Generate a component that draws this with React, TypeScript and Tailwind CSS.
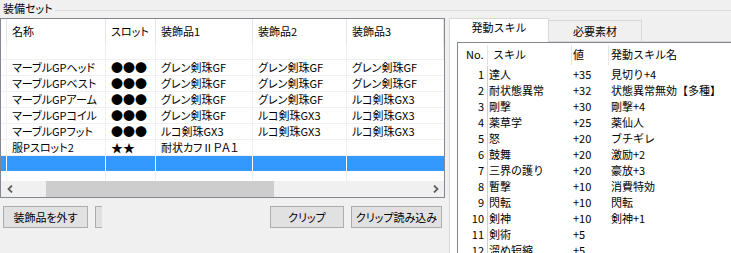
import React from 'react';

// 装備セット一覧。
const EQUIP_ROWS = [
  { name: 'マーブルGPヘッド', slot: '●●●', d1: 'グレン剣珠GF', d2: 'グレン剣珠GF', d3: 'グレン剣珠GF' },
  { name: 'マーブルGPベスト', slot: '●●●', d1: 'グレン剣珠GF', d2: 'グレン剣珠GF', d3: 'グレン剣珠GF' },
  { name: 'マーブルGPアーム', slot: '●●●', d1: 'グレン剣珠GF', d2: 'グレン剣珠GF', d3: 'ルコ剣珠GX3' },
  { name: 'マーブルGPコイル', slot: '●●●', d1: 'グレン剣珠GF', d2: 'ルコ剣珠GX3', d3: 'ルコ剣珠GX3' },
  { name: 'マーブルGPフット', slot: '●●●', d1: 'ルコ剣珠GX3', d2: 'ルコ剣珠GX3', d3: 'ルコ剣珠GX3' },
  { name: '服Pスロット2', slot: '★★', d1: '耐状カフⅡＰＡ１', d2: '', d3: '' },
];

// 発動スキル一覧。
const SKILL_ROWS = [
  ['達人', '+35', '見切り+4'],
  ['耐状態異常', '+32', '状態異常無効【多種】'],
  ['剛撃', '+30', '剛撃+4'],
  ['薬草学', '+25', '薬仙人'],
  ['怒', '+20', 'ブチギレ'],
  ['鼓舞', '+20', '激励+2'],
  ['三界の護り', '+20', '豪放+3'],
  ['暫撃', '+10', '消費特効'],
  ['閃転', '+10', '閃転'],
  ['剣神', '+10', '剣神+1'],
  ['剣術', '+5', ''],
  ['溜め短縮', '+5', ''],
];

const COLS = ['w-[6px]', 'w-[99px]', 'w-[50px]', 'w-[97px]', 'w-[94px]', 'flex-1'];

function Cell({ w, line, pad = 'pl-[5px]', children }: { w: string; line: string; pad?: string; children?: React.ReactNode }) {
  return (
    <div className={`${w} shrink-0 h-full border-r ${line} ${pad} whitespace-nowrap overflow-hidden leading-[15px]`}>
      {children}
    </div>
  );
}

function Chevron({ dir }: { dir: 'left' | 'right' }) {
  return (
    <svg width="6" height="8" viewBox="0 0 6 8">
      <path d={dir === 'left' ? 'M5 0.5 L1.5 4 L5 7.5' : 'M1 0.5 L4.5 4 L1 7.5'} fill="none" stroke="#606060" strokeWidth="1.8" />
    </svg>
  );
}

function EquipTable() {
  return (
    <div className="h-[180px] border border-[#828790] bg-white flex flex-col">
      <div className="h-[162px] overflow-hidden">
        {/* ヘッダー */}
        <div className="flex h-[25px] items-stretch">
          {['', '名称', 'スロット', '装飾品1', '装飾品2', '装飾品3'].map((t, i) => (
            <div key={i} className={`${COLS[i]} shrink-0 flex items-center border-r border-[#e5e5e5] ${i === 0 ? '' : 'pl-[5px]'} whitespace-nowrap`}>
              {t}
            </div>
          ))}
        </div>
        <div className="flex h-[16px] border-b border-[#f0f0f0]">
          {COLS.map((w, i) => <Cell key={i} w={w} line="border-[#f0f0f0]" />)}
        </div>
        {EQUIP_ROWS.map((r) => (
          <div key={r.name} className="flex h-[16px] border-b border-[#f0f0f0]">
            <Cell w={COLS[0]} line="border-[#f0f0f0]" pad="" />
            <Cell w={COLS[1]} line="border-[#f0f0f0]">{r.name}</Cell>
            <Cell w={COLS[2]} line="border-[#f0f0f0]"><span className="text-[12px]">{r.slot}</span></Cell>
            <Cell w={COLS[3]} line="border-[#f0f0f0]">{r.d1}</Cell>
            <Cell w={COLS[4]} line="border-[#f0f0f0]">{r.d2}</Cell>
            <Cell w={COLS[5]} line="border-transparent">{r.d3}</Cell>
          </div>
        ))}
        {/* 選択行 */}
        <div className="flex h-[16px] bg-[#3399ff] border-b border-white">
          {COLS.map((w, i) => <Cell key={i} w={w} line={i === 5 ? 'border-transparent' : 'border-white'} pad="" />)}
        </div>
        <div className="flex h-[16px]">
          {COLS.map((w, i) => <Cell key={i} w={w} line={i === 5 ? 'border-transparent' : 'border-[#f0f0f0]'} pad="" />)}
        </div>
      </div>
      {/* 横スクロールバー */}
      <div className="h-[16px] bg-[#f0f0f0] flex">
        <div className="w-[17px] flex items-center justify-center"><Chevron dir="left" /></div>
        <div className="flex-1 flex">
          <div className="ml-[28px] w-[228px] bg-[#cdcdcd]" />
        </div>
        <div className="w-[17px] flex items-center justify-center"><Chevron dir="right" /></div>
      </div>
    </div>
  );
}

function SkillTable() {
  return (
    <div className="border-l border-t border-[#828790] bg-white h-[220px] [font-feature-settings:normal]">
      <div className="flex h-[23px] items-center">
        <div className="w-[30px] h-[20px] shrink-0 border-r border-[#e5e5e5] pl-[8px] flex items-center">No.</div>
        <div className="w-[84px] h-[20px] shrink-0 border-r border-[#e5e5e5] pl-[5px] flex items-center">スキル</div>
        <div className="w-[37px] h-[20px] shrink-0 border-r border-[#e5e5e5] pl-[1px] flex items-center">値</div>
        <div className="flex-1 pl-[2px] whitespace-nowrap">発動スキル名</div>
      </div>
      {SKILL_ROWS.map((r, i) => (
        <div key={i} className="flex h-[16px] leading-[16px]">
          <div className="w-[30px] shrink-0 border-r border-[#d0d0d0] pr-[3px] text-right">{i + 1}</div>
          <div className="w-[84px] shrink-0 pl-[1px] whitespace-nowrap">{r[0]}</div>
          <div className="w-[37px] shrink-0 pl-[1px]">{r[1]}</div>
          <div className="flex-1 pl-[2px] whitespace-nowrap">{r[2]}</div>
        </div>
      ))}
    </div>
  );
}

export default function App() {
  return (
    <div className="w-[731px] h-[253px] overflow-hidden bg-[#f0f0f0] text-black text-[11px] font-['Noto_Sans_CJK_JP',sans-serif] [font-feature-settings:'palt']">
      {/* グループボックス見出し */}
      <div className="flex h-[18px]">
        <span className="pl-[3px] pr-[2px] leading-[16px]">装備セット</span>
        <div className="flex-1 mt-[10px] border-t border-[#dcdcdc]" />
      </div>

      <div className="flex">
        <div className="w-[445px] shrink-0">
          <EquipTable />
          <div className="flex mt-[8px] h-[22px]">
            <button className="ml-[3px] w-[85px] h-full bg-[#e1e1e1] border border-[#adadad]">装飾品を外す</button>
            <div className="ml-[7px] w-[7px] h-full bg-[#e1e1e1] border-l border-y border-[#adadad]" />
            <button className="ml-[168px] w-[74px] h-full bg-[#e1e1e1] border border-[#adadad]">クリップ</button>
            <button className="ml-[7px] w-[91px] h-full bg-[#e1e1e1] border border-[#adadad]">クリップ読み込み</button>
          </div>
        </div>

        {/* タブ */}
        <div className="ml-[4px] w-[300px] shrink-0">
          <div className="flex items-end h-[23px] [font-feature-settings:normal]">
            <div className="relative z-10 w-[100px] h-[24px] mb-[-1px] bg-white border-x border-t border-[#d9d9d9] flex justify-center leading-[17px]">
              発動スキル
            </div>
            <div className="w-[93px] h-[21px] bg-[#f0f0f0] border-t border-r border-[#d9d9d9] flex items-center justify-center">
              必要素材
            </div>
          </div>
          <div className="border-l border-t border-[#d9d9d9] bg-white pl-[7px] h-[230px]">
            <SkillTable />
          </div>
        </div>
      </div>
    </div>
  );
}
